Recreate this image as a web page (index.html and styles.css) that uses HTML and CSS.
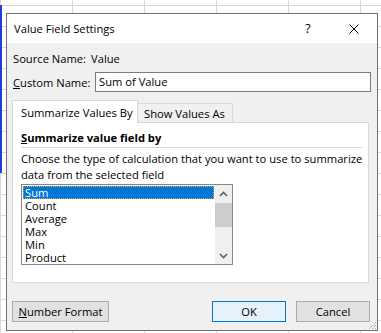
FILE: index.html
```html
<!DOCTYPE html>
<html lang="en">
<head>
  <meta charset="UTF-8" />
  <title>Value Field Settings</title>
  <link rel="stylesheet" href="styles.css">
</head>
<body>

  <div class="cell-select"></div>

  <div class="dialog">
    <div class="titlebar">
      <span class="title">Value Field Settings</span>
      <span class="caption-btn">?</span>
      <span class="caption-btn">
        <svg width="10" height="10" viewBox="0 0 10 10"><path d="M0.5 0.5 L9.5 9.5 M9.5 0.5 L0.5 9.5" stroke="#000" stroke-width="1"/></svg>
      </span>
    </div>

    <div class="content">
      <div class="row source">
        <span class="label">Source Name:</span>
        <span>Value</span>
      </div>

      <div class="row custom">
        <span class="label"><u>C</u>ustom Name:</span>
        <div class="textbox">Sum of Value</div>
      </div>

      <div class="tabs">
        <div class="tab active">Summarize Values By</div>
        <div class="tab">Show Values As</div>
      </div>

      <div class="panel">
        <div class="heading"><u>S</u>ummarize value field by</div>
        <p class="desc">Choose the type of calculation that you want to use to summarize<br>data from the selected field</p>

        <div class="listbox">
          <ul class="items">
            <li class="selected">Sum</li>
            <li>Count</li>
            <li>Average</li>
            <li>Max</li>
            <li>Min</li>
            <li>Product</li>
          </ul>
          <div class="scrollbar">
            <div class="arrow">
              <svg width="9" height="6" viewBox="0 0 9 6"><path d="M1 5 L4.5 1.5 L8 5" fill="none" stroke="#606060" stroke-width="1.6"/></svg>
            </div>
            <div class="thumb"></div>
            <div class="track"></div>
            <div class="arrow">
              <svg width="9" height="6" viewBox="0 0 9 6"><path d="M1 1 L4.5 4.5 L8 1" fill="none" stroke="#606060" stroke-width="1.6"/></svg>
            </div>
          </div>
        </div>
      </div>

      <div class="buttons">
        <button class="btn wide"><u>N</u>umber Format</button>
        <button class="btn ok">OK</button>
        <button class="btn">Cancel</button>
      </div>
    </div>

    <svg class="grip" width="10" height="10" viewBox="0 0 10 10">
      <path d="M9 2 L2 9 M9 5 L5 9 M9 8 L8 9" stroke="#8a8a8a" stroke-width="1" stroke-dasharray="1 1"/>
    </svg>
  </div>

</body>
</html>
```

FILE: styles.css
```css
* {
  box-sizing: border-box;
}

body {
  margin: 0;
  padding: 13px 0 0 6px;
  height: 333px;
  overflow: hidden;
  position: relative;
  font-family: "Open Sans", "Noto Sans", sans-serif;
  font-size: 11.2px;
  white-space: nowrap;
  color: #000;
  background-color: #fff;
  background-image:
    linear-gradient(to right, #d8d8d8 1px, transparent 1px),
    linear-gradient(to bottom, #d8d8d8 1px, transparent 1px);
  background-size: 72px 21px;
  background-position: 0 5px;
}

.cell-select {
  position: absolute;
  left: 0;
  top: 5px;
  width: 2px;
  height: 168px;
  background: #1f3fd8;
}

.dialog {
  position: relative;
  width: 372px;
  height: 318px;
  border: 1px solid #707070;
  background: #f0f0f0;
  display: flex;
  flex-direction: column;
}

.titlebar {
  height: 29px;
  background: #fff;
  display: flex;
  align-items: center;
  padding-left: 7px;
}

.title {
  flex: 1;
}

.caption-btn {
  width: 46px;
  height: 29px;
  display: flex;
  align-items: center;
  justify-content: center;
  font-size: 12.5px;
}

.content {
  flex: 1;
  padding: 7px 6px 8px 5px;
  display: flex;
  flex-direction: column;
}

.row {
  display: flex;
  align-items: center;
}

.source {
  height: 16px;
  padding-left: 1px;
}

.source .label {
  width: 78px;
}

.custom {
  height: 20px;
  margin-top: 6px;
  padding-left: 1px;
}

.custom .label {
  width: 82px;
}

.textbox {
  flex: 1;
  height: 20px;
  border: 1px solid #7a7a7a;
  background: #fff;
  padding-left: 3px;
  line-height: 18px;
}

.tabs {
  display: flex;
  align-items: flex-end;
  height: 22px;
  margin-top: 8px;
}

.tab {
  height: 19px;
  width: 95px;
  border: 1px solid #d9d9d9;
  border-left: none;
  border-bottom: none;
  padding-left: 6px;
  line-height: 19px;
}

.tab.active {
  width: 126px;
  height: 23px;
  margin-bottom: -1px;
  border-left: 1px solid #d9d9d9;
  background: #fff;
  padding-left: 8px;
  line-height: 23px;
  position: relative;
}

.panel {
  width: 357px;
  height: 161px;
  border: 1px solid #d9d9d9;
  background: #fff;
  padding: 7px 6px 0 8px;
}

.heading {
  font-weight: bold;
  line-height: 16px;
  padding-bottom: 1px;
  border-bottom: 1px solid #d5d5d5;
}

.desc {
  margin: 3px 0 0;
  line-height: 16px;
}

.listbox {
  width: 212px;
  height: 81px;
  margin-top: 1px;
  border: 1px solid #828790;
  display: flex;
}

.items {
  flex: 1;
  list-style: none;
  margin: 0;
  padding: 1px;
}

.items li {
  height: 13px;
  line-height: 13px;
  padding-left: 2px;
}

.items li.selected {
  background: #0078d7;
  color: #fff;
  outline: 1px dotted #f3a23a;
  outline-offset: -1px;
}

.scrollbar {
  width: 17px;
  background: #f0f0f0;
  display: flex;
  flex-direction: column;
}

.arrow {
  height: 17px;
  display: flex;
  align-items: center;
  justify-content: center;
}

.thumb {
  height: 24px;
  margin-top: 1px;
  background: #cdcdcd;
}

.track {
  flex: 1;
}

.buttons {
  display: flex;
  margin-top: 18px;
  padding-right: 1px;
}

.btn {
  height: 21px;
  width: 74px;
  padding: 0;
  border: 1px solid #adadad;
  background: #e1e1e1;
  font: inherit;
  color: #000;
}

.btn.wide {
  width: 97px;
  margin-right: auto;
}

.btn.ok {
  margin-right: 10px;
  border-color: #0078d7;
  background: #e5f1fb;
}

.grip {
  position: absolute;
  right: 0;
  bottom: 0;
}
```
